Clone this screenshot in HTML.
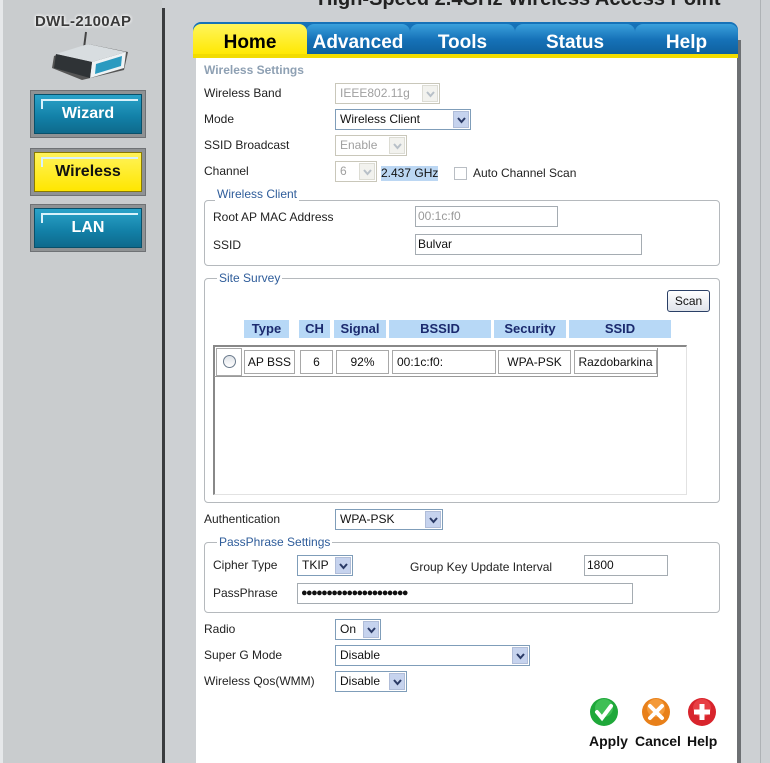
<!DOCTYPE html>
<html><head><meta charset="utf-8"><style>
*{margin:0;padding:0;box-sizing:border-box}
body{width:770px;height:763px;overflow:hidden;background:#cdd0d3;font-family:"Liberation Sans",sans-serif;font-size:12px;color:#111;position:relative}
.a{position:absolute;white-space:nowrap}
.lbl{position:absolute;font-size:12px;line-height:14px;color:#222}
.sel{position:absolute;background:#fff;border:1px solid #7f9db9;font-size:12px;line-height:19px;padding-left:4px;color:#111}
.sel .ar{position:absolute;right:1px;top:1px;bottom:1px;width:16px;background:#c6d3ee;border:1px solid #b0bdd8}
.sel .ar svg{position:absolute;left:3px;top:5px}
.sel.dis{border-color:#c9c7ba;color:#a0a0a0}
.sel.dis .ar{background:#f2f2ee;border-color:#dcdcd4}
.inp{position:absolute;background:#fff;border:1px solid #a5acb2;font-size:12px;line-height:19px;padding-left:2px;color:#111}
.fs{position:absolute;border:1px solid #b5b9bd;border-radius:4px}
.leg{position:absolute;background:#fff;color:#2e5c9a;font-size:12px;padding:0 2px;line-height:14px}
.th{position:absolute;top:320px;height:18px;background:#b7d8f6;color:#1b2a6e;font-weight:bold;font-size:13px;text-align:center;line-height:18px}
.td{position:absolute;top:350px;height:24px;border:1px solid #a8a8a8;font-size:12px;line-height:22px;text-align:center;background:#fff}
.btn{position:absolute;left:30px;width:116px;height:48px;background:#8f9294;border:1px solid #6f7275;padding:3px}
.btn div{width:100%;height:100%;border:1px solid #08506a;background:linear-gradient(#2aa3c9,#127fa6 60%,#0e6a8c);color:#fff;font-weight:bold;font-size:16px;text-align:center;line-height:38px;position:relative}
.btn div:before{content:"";position:absolute;left:6px;top:4px;width:95px;height:8px;border-left:2px solid #d8f2fb;border-top:2px solid #d8f2fb}
.tab{position:absolute;top:24px;height:31px;color:#fff;font-weight:bold;font-size:19px;text-align:center;line-height:38px;background:linear-gradient(#3aa0dc,#1672b8 50%,#0e5f9c)}
</style></head><body>
<div class="a" style="left:0;top:0;width:162px;height:763px;background:#c9ccce"></div>
<div class="a" style="left:0;top:0;width:3px;height:763px;background:#e6e8ea"></div>
<div class="a" style="left:162px;top:8px;width:3px;height:755px;background:#3a3c3e"></div>
<div class="a" style="left:35px;top:13px;font-weight:bold;font-size:15px;color:#3a3a3a;text-shadow:0 0 3px #fff,0 0 3px #fff;letter-spacing:0.3px">DWL-2100AP</div>
<svg class="a" style="left:48px;top:30px" width="86" height="52"><line x1="38" y1="2" x2="36" y2="18" stroke="#444" stroke-width="2"/><polygon points="6,26 40,14 80,22 76,40 34,50 4,38" fill="#555"/><polygon points="8,24 40,14 78,22 44,32" fill="#d8dde0"/><polygon points="44,32 78,22 76,38 42,48" fill="#eef2f4"/><polygon points="8,24 44,32 42,48 6,38" fill="#2f3336"/><polygon points="48,34 74,26 73,36 47,44" fill="#2a9ac0"/></svg>
<div class="btn" style="top:90px"><div>Wizard</div></div>
<div class="btn" style="top:148px"><div style="background:linear-gradient(#fff35a,#ffe600);color:#111;border-color:#8a7a00">Wireless</div></div>
<div class="btn" style="top:204px"><div>LAN</div></div>
<div class="a" style="left:318px;top:-12px;font-weight:bold;font-size:20px;color:#222">High-Speed 2.4GHz Wireless Access Point</div>
<div class="a" style="left:737px;top:40px;width:4px;height:723px;background:#6d7073"></div>
<div class="a" style="left:760px;top:0;width:1px;height:763px;background:#aeb2b5"></div>
<div class="a" style="left:193px;top:22px;width:545px;height:36px;background:#1672b8;border-radius:8px 8px 0 0"></div>
<div class="tab" style="left:306px;width:104px;border-radius:8px 8px 0 0">Advanced</div>
<div class="tab" style="left:410px;width:105px;border-radius:8px 8px 0 0">Tools</div>
<div class="tab" style="left:515px;width:120px;border-radius:8px 8px 0 0">Status</div>
<div class="tab" style="left:635px;width:103px;border-radius:8px 8px 0 0">Help</div>
<div class="tab" style="left:193px;width:114px;color:#000;background:linear-gradient(#fff55c,#ffe800);border-radius:8px 8px 0 0">Home</div>
<div class="a" style="left:193px;top:54px;width:545px;height:4px;background:#f2dc00"></div>
<div class="a" style="left:196px;top:58px;width:541px;height:705px;background:#fff"></div>

<div class="a" style="left:204px;top:63px;font-weight:bold;font-size:12px;color:#8ea0b3">Wireless Settings</div>
<div class="lbl" style="left:204px;top:86px">Wireless Band</div>
<div class="lbl" style="left:204px;top:112px">Mode</div>
<div class="lbl" style="left:204px;top:138px">SSID Broadcast</div>
<div class="lbl" style="left:204px;top:164px">Channel</div>
<div class="sel dis" style="left:335px;top:83px;width:105px;height:21px">IEEE802.11g<span class="ar"><svg width="9" height="7"><path d="M1 1l3.5 4L8 1" stroke="#b8c0c8" stroke-width="2" fill="none"/></svg></span></div>
<div class="sel" style="left:335px;top:109px;width:136px;height:21px">Wireless Client<span class="ar"><svg width="9" height="7"><path d="M1 1l3.5 4L8 1" stroke="#2a3a66" stroke-width="2" fill="none"/></svg></span></div>
<div class="sel dis" style="left:335px;top:135px;width:72px;height:21px">Enable<span class="ar"><svg width="9" height="7"><path d="M1 1l3.5 4L8 1" stroke="#b8c0c8" stroke-width="2" fill="none"/></svg></span></div>
<div class="sel dis" style="left:335px;top:161px;width:42px;height:21px">6<span class="ar"><svg width="9" height="7"><path d="M1 1l3.5 4L8 1" stroke="#b8c0c8" stroke-width="2" fill="none"/></svg></span></div>
<div class="a" style="left:381px;top:166px;width:57px;height:15px;background:#bcd7f3;font-size:12px;line-height:15px">2.437 GHz</div>
<div class="a" style="left:454px;top:167px;width:13px;height:13px;border:1px solid #b9bec4;background:#fff"></div>
<div class="lbl" style="left:473px;top:166px">Auto Channel Scan</div>

<div class="fs" style="left:204px;top:200px;width:516px;height:66px"></div>
<div class="leg" style="left:215px;top:187px">Wireless Client</div>
<div class="lbl" style="left:213px;top:210px">Root AP MAC Address</div>
<div class="lbl" style="left:213px;top:238px">SSID</div>
<div class="inp" style="left:415px;top:206px;width:143px;height:21px;color:#999">00:1c:f0</div>
<div class="inp" style="left:415px;top:234px;width:227px;height:21px">Bulvar</div>

<div class="fs" style="left:204px;top:278px;width:516px;height:225px"></div>
<div class="leg" style="left:217px;top:271px">Site Survey</div>
<div class="a" style="left:667px;top:290px;width:43px;height:22px;border:1px solid #2a3f66;border-radius:3px;background:linear-gradient(#fff,#dfe3ea);font-size:12px;line-height:20px;text-align:center">Scan</div>
<div class="th" style="left:244px;width:45px">Type</div>
<div class="th" style="left:299px;width:31px">CH</div>
<div class="th" style="left:334px;width:52px">Signal</div>
<div class="th" style="left:389px;width:102px">BSSID</div>
<div class="th" style="left:494px;width:72px">Security</div>
<div class="th" style="left:569px;width:102px">SSID</div>
<div class="a" style="left:213px;top:345px;width:474px;height:150px;border-top:2px solid #888;border-left:2px solid #888;border-bottom:1px solid #e2e2e2;border-right:1px solid #e2e2e2;background:#fff"></div>
<div class="td" style="left:216px;width:26px;height:28px;top:348px"><div style="position:absolute;left:6px;top:6px;width:13px;height:13px;border-radius:50%;border:1px solid #6a7a8c;background:linear-gradient(#dfe3e8,#fff)"></div></div>
<div class="td" style="left:244px;width:51px">AP BSS</div>
<div class="td" style="left:300px;width:33px">6</div>
<div class="td" style="left:336px;width:53px">92%</div>
<div class="td" style="left:392px;width:104px;text-align:left;padding-left:4px">00:1c:f0:</div>
<div class="td" style="left:498px;width:73px">WPA-PSK</div>
<div class="td" style="left:574px;width:83px">Razdobarkina</div>
<div class="a" style="left:214px;top:348px;width:444px;height:29px;border:1px solid #999;border-top:none;border-left:none"></div>

<div class="lbl" style="left:204px;top:512px">Authentication</div>
<div class="sel" style="left:335px;top:509px;width:108px;height:21px">WPA-PSK<span class="ar"><svg width="9" height="7"><path d="M1 1l3.5 4L8 1" stroke="#2a3a66" stroke-width="2" fill="none"/></svg></span></div>

<div class="fs" style="left:204px;top:542px;width:516px;height:71px"></div>
<div class="leg" style="left:217px;top:535px">PassPhrase Settings</div>
<div class="lbl" style="left:213px;top:558px">Cipher Type</div>
<div class="sel" style="left:297px;top:555px;width:56px;height:21px">TKIP<span class="ar"><svg width="9" height="7"><path d="M1 1l3.5 4L8 1" stroke="#2a3a66" stroke-width="2" fill="none"/></svg></span></div>
<div class="lbl" style="left:410px;top:560px">Group Key Update Interval</div>
<div class="inp" style="left:584px;top:555px;width:84px;height:21px">1800</div>
<div class="lbl" style="left:213px;top:586px">PassPhrase</div>
<div class="inp" style="left:297px;top:583px;width:336px;height:21px;font-size:11px;letter-spacing:-1.6px;padding-left:3px;font-weight:bold">●●●●●●●●●●●●●●●●●●●●●</div>

<div class="lbl" style="left:204px;top:622px">Radio</div>
<div class="lbl" style="left:204px;top:648px">Super G Mode</div>
<div class="lbl" style="left:204px;top:674px">Wireless Qos(WMM)</div>
<div class="sel" style="left:335px;top:619px;width:46px;height:21px">On<span class="ar"><svg width="9" height="7"><path d="M1 1l3.5 4L8 1" stroke="#2a3a66" stroke-width="2" fill="none"/></svg></span></div>
<div class="sel" style="left:335px;top:645px;width:195px;height:21px">Disable<span class="ar"><svg width="9" height="7"><path d="M1 1l3.5 4L8 1" stroke="#2a3a66" stroke-width="2" fill="none"/></svg></span></div>
<div class="sel" style="left:335px;top:671px;width:72px;height:21px">Disable<span class="ar"><svg width="9" height="7"><path d="M1 1l3.5 4L8 1" stroke="#2a3a66" stroke-width="2" fill="none"/></svg></span></div>

<svg class="a" style="left:588px;top:697px" width="132" height="32">
<circle cx="16" cy="15" r="14" fill="#1fa83a"/><circle cx="16" cy="11" r="9" fill="#5fd66f" opacity=".5"/><path d="M9 15l5 6 9-12" stroke="#fff" stroke-width="4" fill="none" stroke-linecap="round"/>
<circle cx="68" cy="15" r="14" fill="#e8801a"/><circle cx="68" cy="11" r="9" fill="#ffb45a" opacity=".5"/><path d="M62 9l12 12M74 9L62 21" stroke="#fff" stroke-width="4" stroke-linecap="round"/>
<circle cx="114" cy="15" r="14" fill="#d8242c"/><circle cx="114" cy="11" r="9" fill="#ff6a6a" opacity=".4"/><path d="M114 7v16M106 15h16" stroke="#fff" stroke-width="5"/>
</svg>
<div class="a" style="left:589px;top:733px;font-weight:bold;font-size:14px">Apply</div>
<div class="a" style="left:635px;top:733px;font-weight:bold;font-size:14px">Cancel</div>
<div class="a" style="left:687px;top:733px;font-weight:bold;font-size:14px">Help</div>
</body></html>
